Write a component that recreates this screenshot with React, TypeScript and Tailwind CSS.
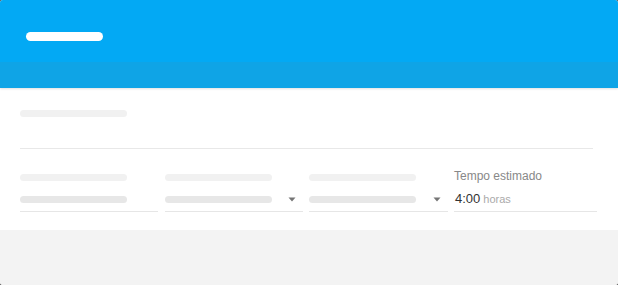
import React from "react";

function Arrow() {
  return (
    <svg width="8" height="5" viewBox="0 0 8 5" className="shrink-0">
      <path d="M0.5 0.5 L7.5 0.5 L4 4.5 Z" fill="#757575" />
    </svg>
  );
}

function SkelField({ arrow, w, className }: { arrow?: boolean; w: string; className?: string }) {
  return (
    <div className={`flex flex-col ${w} ${className ?? ""}`}>
      <div className="h-[7px] w-[107px] rounded-full bg-[#f1f1f1] mt-[6px]" />
      <div className="flex items-center justify-between mt-[15px] pb-[8px] border-b border-[#e6e6e6] pr-[7px]">
        <div className="h-[7px] w-[107px] rounded-full bg-[#e7e7e7]" />
        {arrow && <Arrow />}
      </div>
    </div>
  );
}

export default function App() {
  return (
    <div className="w-[618px] h-[285px] bg-[#5a5a5a]" style={{ fontFamily: '"Liberation Sans", Arial, sans-serif' }}>
      <div className="w-full h-full rounded-[3px] overflow-hidden flex flex-col bg-[#f3f3f3]">
        <div className="relative z-10 shadow-[0_1px_2px_rgba(0,0,0,0.12)]">
          <div className="h-[62px] bg-[#03a9f4] flex items-center pl-[26px]">
            <div className="h-[9px] w-[77px] rounded-full bg-white mt-[11px]" />
          </div>
          <div className="h-[26px] bg-[#0fa4e6]" />
        </div>
        <div className="bg-white px-[20px] pt-[22px] h-[142px]">
          <div className="h-[7px] w-[107px] rounded-full bg-[#f1f1f1]" />
          <div className="mt-[31px] border-b border-[#e8e8e8] mr-[5px]" />
          <div className="flex mt-[19px]">
            <SkelField w="w-[138px]" />
            <SkelField w="w-[138px]" className="ml-[7px]" arrow />
            <SkelField w="w-[139px]" className="ml-[6px]" arrow />
            <div className="flex flex-col w-[143px] ml-[6px]">
              <div className="text-[12px] leading-[14px] text-[#888] mt-[1px]">Tempo estimado</div>
              <div className="flex items-end mt-[8px] pb-[5px] border-b border-[#e6e6e6] pl-[1px]">
                <span className="text-[13px] leading-[15px] text-[#333]">4:00</span>
                <span className="text-[11px] leading-[13px] text-[#aaa] ml-[3px]">horas</span>
              </div>
            </div>
          </div>
        </div>
        <div className="flex-1 bg-[#f3f3f3]" />
      </div>
    </div>
  );
}
